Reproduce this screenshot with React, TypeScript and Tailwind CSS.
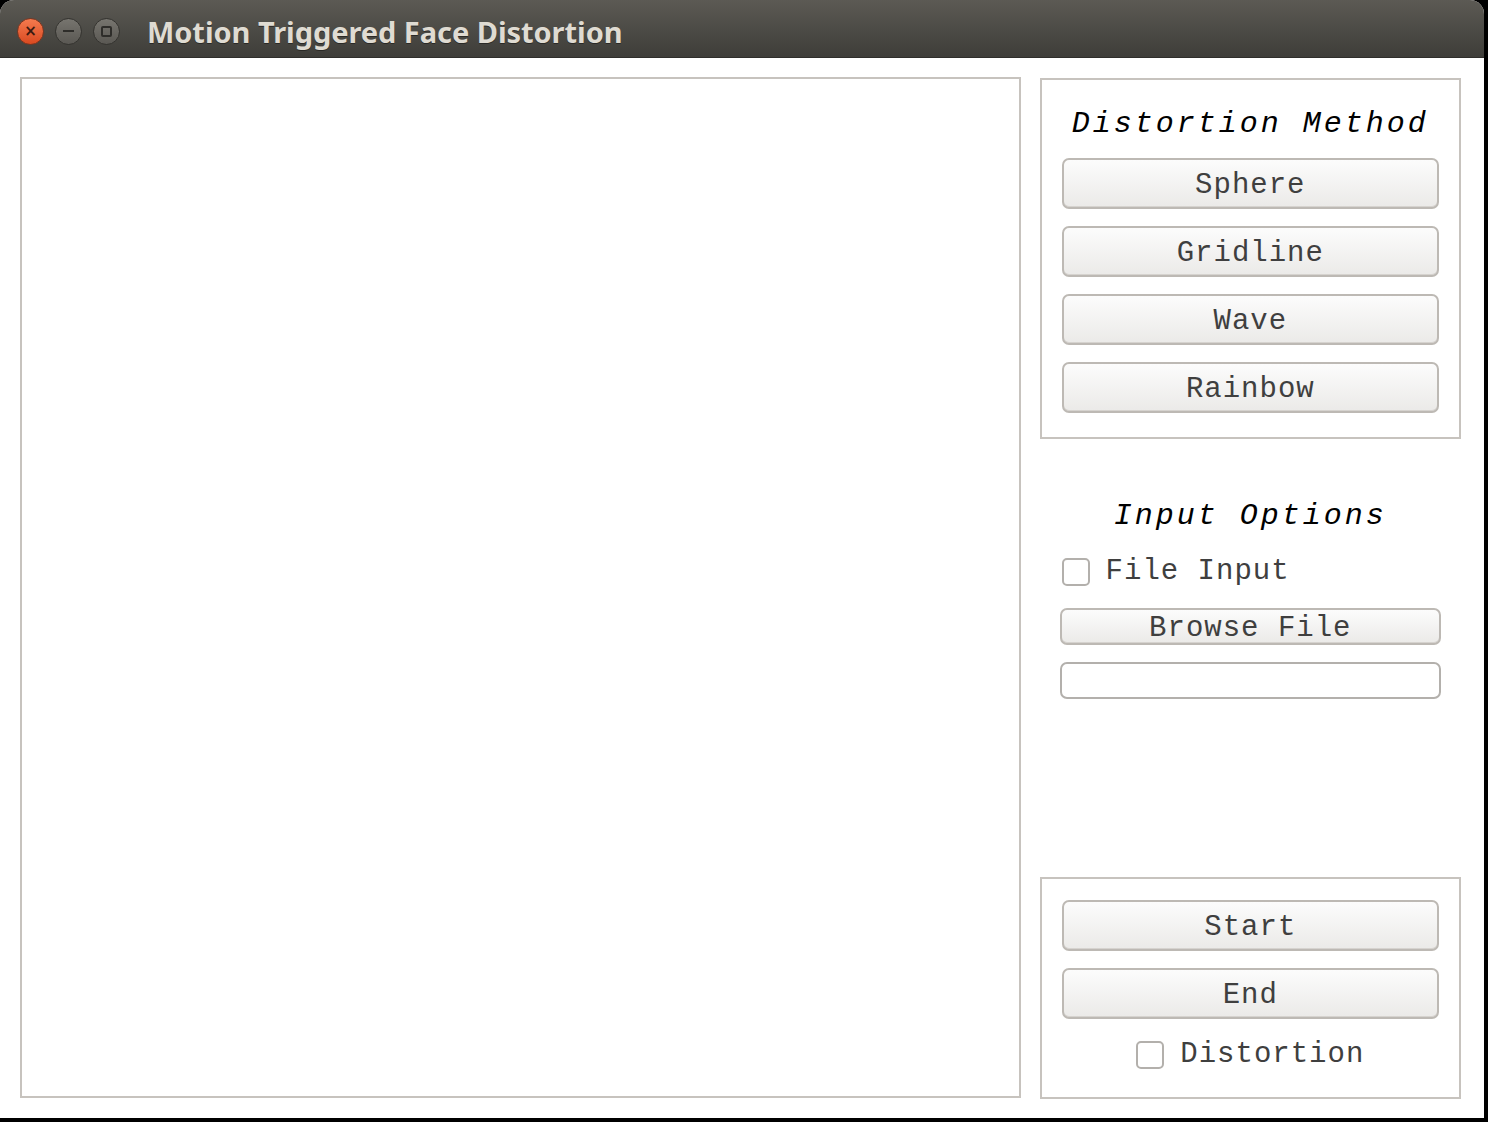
import React from "react";

const mono = "font-['Liberation_Mono','Courier_New',monospace]";

function QtButton({ label, h = "h-[51px]" }: { label: string; h?: string }) {
    return (
        <button
            className={`${h} w-full pt-[3px] rounded-[7px] border-2 border-[#bdb9b4] bg-gradient-to-b from-[#fcfcfc] to-[#ebeae8] text-[#3f3f3f] text-[29px] tracking-[1px] leading-none flex items-center justify-center shadow-[inset_0_-1px_0_#d6d3cf] ${mono}`}
        >
            {label}
        </button>
    );
}

function QtCheck({ label }: { label: string }) {
    return (
        <label className="flex items-center gap-[16px]">
            <span className="w-[28px] h-[28px] rounded-[5px] border-2 border-[#b3b0ac] bg-white" />
            <span className={`text-[29px] tracking-[1px] leading-none text-[#3f3f3f] ${mono}`}>{label}</span>
        </label>
    );
}

function Heading({ text }: { text: string }) {
    return (
        <h2 className={`text-[30px] italic tracking-[3px] leading-none text-black text-center ${mono}`}>{text}</h2>
    );
}

export default function App() {
    return (
        <div className="w-[1488px] h-[1122px] bg-black overflow-hidden">
            <div className="w-[1484px] h-[1118px] bg-white rounded-t-[14px] overflow-hidden flex flex-col">
                {/* title bar */}
                <div className="h-[58px] pt-[5px] bg-gradient-to-b from-[#5c5a54] to-[#3e3d39] flex items-center pl-[17px] gap-[11px] border-b border-[#2f2e2b]">
                    <span className="w-[27px] h-[27px] rounded-full bg-gradient-to-b from-[#f47a4e] to-[#d9491f] border border-[#7a3520] flex items-center justify-center text-[#3a1a10] text-[15px] leading-none font-bold font-['DejaVu_Sans',sans-serif]">
                        ×
                    </span>
                    <span className="w-[27px] h-[27px] rounded-full bg-gradient-to-b from-[#77756f] to-[#5a5853] border border-[#34332f] flex items-center justify-center">
                        <span className="w-[11px] h-[2px] bg-[#2e2d2a]" />
                    </span>
                    <span className="w-[27px] h-[27px] rounded-full bg-gradient-to-b from-[#77756f] to-[#5a5853] border border-[#34332f] flex items-center justify-center">
                        <span className="w-[11px] h-[11px] border-2 border-[#2e2d2a] rounded-[2px]" />
                    </span>
                    <span className="ml-[16px] text-[#dfdbd2] text-[29px] font-bold tracking-[-0.05px] leading-none font-['Noto_Sans',sans-serif] [text-shadow:0_1px_0_#2a2926]">
                        Motion Triggered Face Distortion
                    </span>
                </div>

                {/* content */}
                <div className="flex-1 flex pt-[19px] pb-[19px] pl-[20px] pr-[23px] gap-[19px]">
                    <div className="w-[1002px] h-[1021px] border-2 border-[#c7c3be] bg-white" />

                    <div className="w-[422px] flex flex-col">
                        <div className="mt-[1px] border-2 border-[#c7c3be] px-[20px] pt-[29px] pb-[24px] flex flex-col">
                            <Heading text="Distortion Method" />
                            <div className="mt-[19px] flex flex-col gap-[17px]">
                                <QtButton label="Sphere" />
                                <QtButton label="Gridline" />
                                <QtButton label="Wave" />
                                <QtButton label="Rainbow" />
                            </div>
                        </div>

                        <div className="mt-[62px] px-[20px] flex flex-col">
                            <Heading text="Input Options" />
                            <div className="mt-[26px] pl-[2px]">
                                <QtCheck label="File Input" />
                            </div>
                            <div className="mt-[22px] flex flex-col gap-[17px]">
                                <QtButton label="Browse File" h="h-[37px]" />
                                <div className="h-[37px] w-full rounded-[7px] border-2 border-[#b3b0ac] bg-white" />
                            </div>
                        </div>

                        <div className="flex-1" />

                        <div className="border-2 border-[#c7c3be] px-[20px] pt-[21px] pb-[28px] flex flex-col">
                            <div className="flex flex-col gap-[17px]">
                                <QtButton label="Start" />
                                <QtButton label="End" />
                            </div>
                            <div className="mt-[21px] flex justify-center">
                                <QtCheck label="Distortion" />
                            </div>
                        </div>
                    </div>
                </div>
            </div>
        </div>
    );
}
